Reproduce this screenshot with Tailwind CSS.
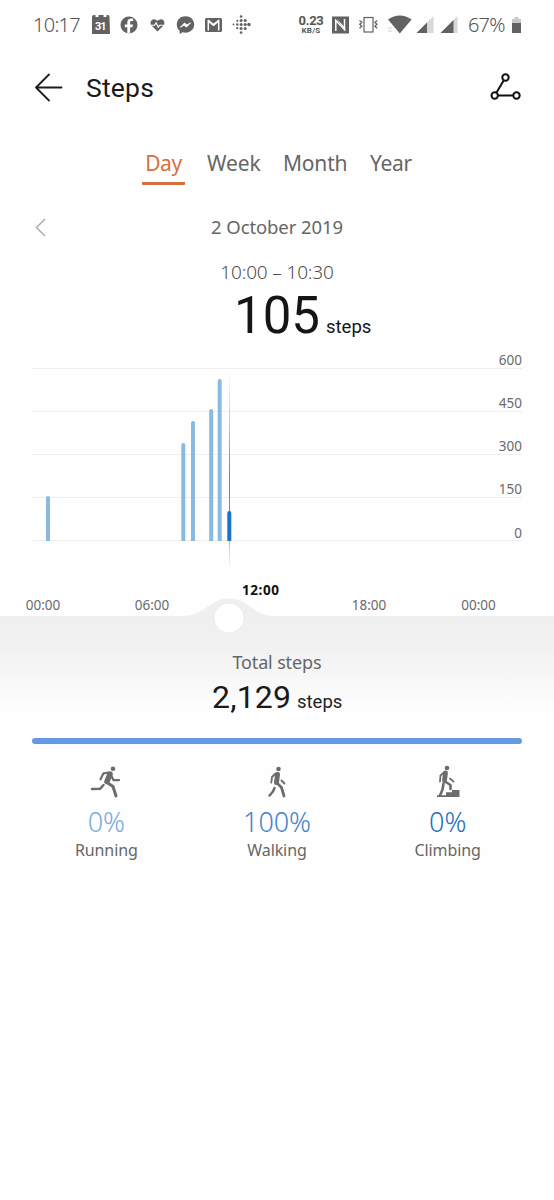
<!DOCTYPE html>
<html lang="en">
<head>
<meta charset="utf-8">
<title>Steps</title>
<script src="https://cdn.jsdelivr.net/npm/@tailwindcss/browser@4"></script>
</head>
<body class="bg-[#fefefe] font-['Noto_Sans',sans-serif] text-[#666]">
<main class="flex h-[1200px] w-[554px] flex-col overflow-hidden">
  <header class="flex h-[50px] shrink-0 items-center justify-between pl-[33px] pr-[32px] text-[#555]">
    <div class="flex items-center">
      <span class="w-[58px] text-[20px] font-light leading-none tracking-[-0.7px]">10:17</span>
      <svg class="h-[22px] w-[165px]" viewBox="91 14 165 22" fill="#626262">
        <path d="M92 17q0-2 2-2h1.500v2h3v-2h5v2h3v-2h1.500q1.500 0 1.500 2l.5 17H92z"/>
        <text x="95" y="30.200" font-family="Roboto" font-size="11" font-weight="700" fill="#fff" textLength="11.500">31</text>
        <circle cx="129" cy="25" r="8.500"/>
        <path d="M127.300 33.500v-6.300h-2.500v-2.700h2.500v-1.900c0-2.700 1.600-4 3.900-4h2v2.500h-1.500c-1.200 0-1.600.6-1.600 1.500v1.900h2.900l-.5 2.700h-2.400v6.300z" fill="#fff"/>
        <path d="M157.500 31.500l-6-5.900c-2.400-3 .1-7 3.500-6.200 1 .2 1.900.8 2.500 1.600.6-.8 1.500-1.400 2.500-1.600 3.400-.8 5.900 3.200 3.500 6.200z"/>
        <path d="M150 25.200h4.500l1.600-2.300 2.200 4.300 1.500-2h4.700" fill="none" stroke="#fff" stroke-width="1.100"/>
        <path d="M185.500 16.300c-4.900 0-8.700 3.500-8.700 8.200 0 2.500 1 4.700 2.800 6.200v3.300l3-1.700c.9.300 1.900.4 2.900.4 4.900 0 8.700-3.500 8.700-8.200s-3.800-8.200-8.700-8.200z"/>
        <path d="M180.500 27.300l4-4.300 2.500 2 3.500-2.200-4 4.300-2.500-2z" fill="#fff" stroke="#fff"/>
        <rect x="205" y="18" width="17" height="14" rx="1.500"/>
        <path d="M208.300 30.500v-9.300l5.200 4.200 5.200-4.200v9.300M208 20l5.500 4.500 5.500-4.500" fill="none" stroke="#fff" stroke-width="1.500"/>
        <g><circle cx="233.500" cy="24.500" r=".9"/><circle cx="237.300" cy="20.800" r="1.100"/><circle cx="237.300" cy="24.500" r="1.200"/><circle cx="237.300" cy="28.200" r="1.100"/><circle cx="241.100" cy="16.500" r="1.300"/><circle cx="241.100" cy="20.600" r="1.500"/><circle cx="241.100" cy="24.500" r="1.500"/><circle cx="241.100" cy="28.500" r="1.500"/><circle cx="241.100" cy="32.600" r="1.300"/><circle cx="245.200" cy="20.600" r="1.500"/><circle cx="245.200" cy="24.500" r="1.600"/><circle cx="245.200" cy="28.500" r="1.500"/><circle cx="249" cy="24.500" r="1.700"/></g>
      </svg>
    </div>
    <div class="flex items-center">
      <div class="mr-[8px] flex w-[26px] flex-col items-center font-[Roboto] leading-none">
        <span class="text-[13px] font-bold leading-[11px] tracking-[-0.3px]">0.23</span>
        <span class="mt-[1px] text-[8px] font-bold leading-[8px] tracking-[0.2px]">KB/S</span>
      </div>
      <svg class="h-[22px] w-[130px]" viewBox="332 14 130 22" fill="#626262">
        <rect x="332" y="16.500" width="17" height="17"/>
        <path d="M335.800 31V20.500l8.700 9.200V19" fill="none" stroke="#fff" stroke-width="1.500"/>
        <path d="M336.500 18.500l8.700 9.200v3z" fill="#fff"/>
        <rect x="364" y="17.500" width="9" height="14.500" fill="none" stroke="#626262" stroke-width="1.200"/>
        <path d="M359.500 20.500l2.300 1.700-2 2 2 2-2.300 2M377.200 20.500l-2.300 1.700 2 2-2 2 2.300 2" fill="none" stroke="#626262" stroke-width="1.300"/>
        <path d="M388 19.500q11.800-8 23.600 0L399.800 33.500z"/>
        <path d="M388 28h4M388 31h4" stroke="#d0d0d0"/>
        <path d="M433.500 16v17h-17z" fill="#d8d8d8"/><path d="M427 22.500v10.500h-10.500z"/>
        <path d="M457.500 16v17h-17z" fill="#d8d8d8"/><path d="M453.500 20v13h-13z"/>
      </svg>
      <span class="ml-[6px] w-[43px] text-[20px] font-light leading-none tracking-[-0.8px]">67%</span>
      <svg class="h-[18px] w-[11px]" viewBox="0 0 11 18"><path d="M1 3h2.500V1h4v2H10v5H1z" fill="#c8c8c8"/><path d="M1 7h9v10H1z" fill="#626262"/></svg>
    </div>
  </header>

  <nav class="flex h-[76px] shrink-0 items-center pl-[34px] pr-[32px] text-[#1a1a1a]">
    <svg class="h-[30px] w-[30px]" viewBox="34 73 30 30" fill="none" stroke="#1c1c1c" stroke-width="1.800" stroke-linecap="round" stroke-linejoin="round"><path d="M61.500 87.500H36M49 74.500l-13 13 13 13"/></svg>
    <h1 class="ml-[22px] grow font-[Roboto] text-[26.5px] leading-none tracking-[0.2px]">Steps</h1>
    <svg class="h-[32px] w-[32px]" viewBox="490 72 32 32" fill="none" stroke="#111" stroke-width="2"><circle cx="505.500" cy="77.500" r="3.200"/><circle cx="494.700" cy="95.500" r="3.200"/><circle cx="516.500" cy="95.500" r="3.200"/><path d="M503.800 80.300l-7.400 12.400M498 95.500h15.300"/></svg>
  </nav>

  <div class="flex h-[60px] shrink-0 pl-[142px] pt-[26px] text-[21px] leading-[23px]">
    <div class="mr-[22px] h-[33px] w-[43px] rounded-b-[1px] border-b-[3px] border-[#d4703f] text-center tracking-[-0.4px] text-[#d4703f]">Day</div>
    <div class="w-[76px] tracking-[-0.1px]">Week</div>
    <div class="w-[87px] tracking-[-0.2px]">Month</div>
    <div class="tracking-[-0.3px]">Year</div>
  </div>

  <div class="flex h-[82px] shrink-0 items-center pl-[34px] pr-[48px]">
    <svg class="h-[20px] w-[14px]" viewBox="0 0 14 20" fill="none" stroke="#b0b0b0" stroke-width="1.600"><path d="M11 2L2.500 10.500l8.500 8.500"/></svg>
    <div class="grow text-center text-[18.5px] leading-none tracking-[-0.1px]">2 October 2019</div>
  </div>
  <div class="-mt-[6px] flex h-[20px] shrink-0 items-center justify-center text-[19px] font-light leading-none tracking-[-0.15px] text-[#505050]">10:00 – 10:30</div>
  <div class="mt-[5px] flex h-[61px] shrink-0 items-baseline pl-[234px] font-[Roboto] text-[#151515]">
    <span class="text-[51px] leading-[58px]">105</span><span class="ml-[6px] text-[18.500px]">steps</span>
  </div>

  <svg class="h-[362px] w-[554px] shrink-0 overflow-visible" viewBox="0 348 554 362" font-family="'Noto Sans',sans-serif">
    <defs>
      <linearGradient id="fade" gradientUnits="userSpaceOnUse" x1="0" x2="0" y1="598" y2="710"><stop stop-color="#efefef"/><stop offset=".45" stop-color="#f1f1f1"/><stop offset=".7" stop-color="#f7f7f7"/><stop offset="1" stop-color="#fefefe"/></linearGradient>
      <linearGradient id="cursor" gradientUnits="userSpaceOnUse" x1="0" x2="0" y1="370" y2="570"><stop stop-color="#7aa5c6" stop-opacity="0"/><stop offset=".5" stop-color="#5a92bd"/><stop offset=".75" stop-color="#5a92bd"/><stop offset="1" stop-color="#7aa5c6" stop-opacity="0"/></linearGradient>
    </defs>
    <path d="M32 368.500h490M32 411.500h490M32 454.500h490M32 497.500h490M32 540.500h490" stroke="#efefef"/>
    <g fill="#6a6a6a" font-size="13.500" text-anchor="end"><text x="522" y="365">600</text><text x="522" y="408">450</text><text x="522" y="451">300</text><text x="522" y="494">150</text><text x="522" y="537.500">0</text></g>
    <g fill="#88bae2"><path d="M46 541v-43q0-2 2-2t2 2v43z"/><path d="M181.300 541v-96q0-2 2-2t2 2v96z"/><path d="M191 541V423q0-2 2-2t2 2v118z"/><path d="M209.200 541V411q0-2 2-2t2 2v130z"/><path d="M217.700 541V381q0-2 2-2t2 2v160z"/></g>
    <rect x="229" y="370" width="1" height="200" fill="url(#cursor)"/>
    <path d="M227.300 541v-28q0-2 2-2t2 2v28z" fill="#1774c8"/>
    <path d="M0 616h183C205 616 209 598.500 229 598.500S253 616 275 616H554v94H0z" fill="url(#fade)"/>
    <circle cx="229" cy="618" r="15" fill="#fff" stroke="#e6e6e6" stroke-width=".7"/>
    <g fill="#6a6a6a" font-size="13.500" text-anchor="middle"><text x="43" y="609.500">00:00</text><text x="152" y="609.500">06:00</text><text x="369" y="609.500">18:00</text><text x="478.500" y="609.500">00:00</text><text x="260.500" y="594.500" font-weight="700" fill="#111" textLength="37">12:00</text></g>
    <text x="277" y="668.500" font-size="18" fill="#666" text-anchor="middle" textLength="89">Total steps</text>
    <text x="212" y="708" font-family="Roboto" font-size="32" fill="#1a1a1a" textLength="79">2,129</text>
    <text x="297" y="708" font-family="Roboto" font-size="18.500" fill="#222">steps</text>
  </svg>

  <div class="mx-[32px] mt-[28px] h-[6px] shrink-0 rounded-full bg-[#6599e2]"></div>
  <section class="mx-[21px] mt-[21px] grid grid-cols-3 text-[16px]">
    <div class="flex flex-col items-center">
      <svg class="h-[34px] w-[34px]" viewBox="90 765 34 34" fill="none" stroke="#6c6c6c" stroke-linecap="round" stroke-linejoin="round"><circle cx="114" cy="768.800" r="2.300" fill="#6c6c6c" stroke="none"/><path d="M111 774l-3 7.500" stroke-width="5.500"/><path d="M110 772.500l-5.500.8-3 6M112 775l2.500 5.200h5.500" stroke-width="2.200"/><path d="M108 782.500l6 4 3 9.500" stroke-width="3"/><path d="M104.500 785l-3.500 3.800-8 .2" stroke-width="2.500"/></svg>
      <div class="mt-[7px] text-[27px] font-light leading-[32px] tracking-[-0.1px] text-[#79abdc]">0%</div>
      <div class="mt-[3px] leading-[18px] tracking-[-0.1px]">Running</div>
    </div>
    <div class="flex flex-col items-center">
      <svg class="h-[34px] w-[34px]" viewBox="260 765 34 34" fill="none" stroke="#6c6c6c" stroke-linecap="round" stroke-linejoin="round"><circle cx="278.500" cy="769" r="2.300" fill="#6c6c6c" stroke="none"/><path d="M277.500 774.500l-1 8" stroke-width="5"/><path d="M275.500 773.500l-3.500 3.500-.7 5.500M281.500 780.500l3 3" stroke-width="1.900"/><path d="M277 783l4.500 4.500 2.500 8.500" stroke-width="2.800"/><path d="M274.500 788l-1.500 3.500-3.500 4" stroke-width="2.500"/></svg>
      <div class="mt-[7px] text-[27px] font-light leading-[32px] tracking-[-0.1px] text-[#4384cb]">100%</div>
      <div class="mt-[3px] leading-[18px] tracking-[-0.1px]">Walking</div>
    </div>
    <div class="flex flex-col items-center">
      <svg class="h-[34px] w-[34px]" viewBox="430 765 34 34" fill="none" stroke="#6c6c6c" stroke-linecap="round" stroke-linejoin="round"><circle cx="446" cy="768" r="2.300" fill="#6c6c6c" stroke="none"/><path d="M444.500 773l-1 7.500" stroke-width="4.800"/><path d="M443 772.500l-3.500 3-.5 6M449 778.500l3.500 3.200" stroke-width="1.800"/><path d="M444 781.500l5.500 3.500v4" stroke-width="2.600"/><path d="M442.500 783.500l-1 6-2.500 6" stroke-width="2.600"/><path d="M436 797v-1.800h9v-3h6V790h7.500v7z" fill="#6c6c6c" stroke="none"/></svg>
      <div class="mt-[7px] text-[27px] font-light leading-[32px] tracking-[-0.1px] text-[#2170be]">0%</div>
      <div class="mt-[3px] leading-[18px] tracking-[-0.1px]">Climbing</div>
    </div>
  </section>
</main>
</body>
</html>
